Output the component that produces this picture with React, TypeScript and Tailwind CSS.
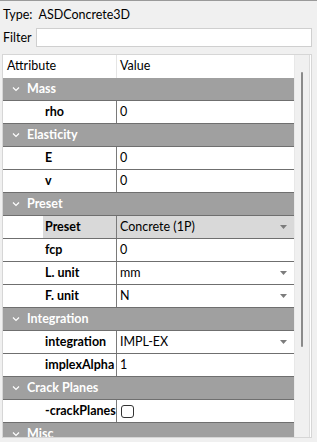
import React from 'react';

type Row =
    | { kind: 'group'; title: string }
    | { kind: 'prop'; label: string; value?: string; dropdown?: boolean; checkbox?: boolean; selected?: boolean };

const rows: Row[] = [
    { kind: 'group', title: 'Mass' },
    { kind: 'prop', label: 'rho', value: '0' },
    { kind: 'group', title: 'Elasticity' },
    { kind: 'prop', label: 'E', value: '0' },
    { kind: 'prop', label: 'v', value: '0' },
    { kind: 'group', title: 'Preset' },
    { kind: 'prop', label: 'Preset', value: 'Concrete (1P)', dropdown: true, selected: true },
    { kind: 'prop', label: 'fcp', value: '0' },
    { kind: 'prop', label: 'L. unit', value: 'mm', dropdown: true },
    { kind: 'prop', label: 'F. unit', value: 'N', dropdown: true },
    { kind: 'group', title: 'Integration' },
    { kind: 'prop', label: 'integration', value: 'IMPL-EX', dropdown: true },
    { kind: 'prop', label: 'implexAlpha', value: '1' },
    { kind: 'group', title: 'Crack Planes' },
    { kind: 'prop', label: '-crackPlanes', checkbox: true },
    { kind: 'group', title: 'Misc' },
];

const Chevron = () => (
    <svg width="8" height="6" viewBox="0 0 8 6" className="shrink-0">
        <path d="M1 1.5 L4 4.5 L7 1.5" fill="none" stroke="#ffffff" strokeWidth="1.2" />
    </svg>
);

const DropArrow = () => (
    <svg width="7" height="4" viewBox="0 0 7 4" className="shrink-0">
        <path d="M0 0 H7 L3.5 4 Z" fill="#7c7c7c" />
    </svg>
);

const TableRow: React.FC<{ row: Row }> = ({ row }) => {
    if (row.kind === 'group') {
        return (
            <div className="h-[23px] flex items-center bg-[#a0a0a0] border-b border-[#6f6f6f] text-white font-bold">
                <div className="w-[23px] flex justify-center pl-[2px]">
                    <Chevron />
                </div>
                <span className="pl-[1px]">{row.title}</span>
            </div>
        );
    }
    return (
        <div className="h-[23px] flex border-b border-[#6f6f6f] bg-white">
            <div className="w-[40px] shrink-0" />
            <div className={`w-[73px] shrink-0 flex items-center pl-[2px] font-bold whitespace-nowrap overflow-hidden ${row.selected ? 'bg-[#d9d9d9]' : ''}`}>
                {row.label}
            </div>
            <div className={`flex-1 flex items-center pl-[3px] pr-[7px] border-l border-[#7a7a7a] ${row.selected ? 'bg-[#d9d9d9]' : ''}`}>
                {row.checkbox ? (
                    <div className="w-[13px] h-[13px] border border-[#333] rounded-[3px] bg-white ml-[1px]" />
                ) : (
                    <span className="flex-1">{row.value}</span>
                )}
                {row.dropdown && <DropArrow />}
            </div>
        </div>
    );
};

export default function App() {
    return (
        <div className="w-[317px] h-[442px] bg-[#f0f0f0] border-t border-[#9a9a9a] overflow-hidden text-[12.5px] text-black font-['Lato',sans-serif]">
            <div className="pt-[5px] pl-[3px] h-[23px] leading-[18px]">Type:&nbsp; ASDConcrete3D</div>
            <div className="mt-[4px] h-[19px] flex items-center">
                <span className="w-[36px] pl-[3px] leading-[18px]">Filter</span>
                <div className="w-[276px] h-[19px] bg-white border border-[#cfcfcf]" />
            </div>
            <div className="mt-[7px] ml-[2px] w-[310px] h-[384px] border border-[#d6d6d6] bg-white flex">
                <div className="w-[291px] flex flex-col overflow-hidden">
                    <div className="h-[23px] shrink-0 flex items-center">
                        <div className="w-[113px] pl-[4px]">Attribute</div>
                        <div className="h-full border-l border-[#e5e5e5]" />
                        <div className="pl-[3px]">Value</div>
                    </div>
                    {rows.map((r, i) => (
                        <div key={i} className="shrink-0">
                            <TableRow row={r} />
                        </div>
                    ))}
                </div>
                <div className="flex-1 bg-[#f0f0f0] border-l border-[#e8e8e8] border-r border-r-[#dcdcdc] mr-[1px] flex justify-center">
                    <div className="mt-[17px] w-[2px] h-[275px] bg-[#8a8a8a] rounded-full" />
                </div>
            </div>
        </div>
    );
}
